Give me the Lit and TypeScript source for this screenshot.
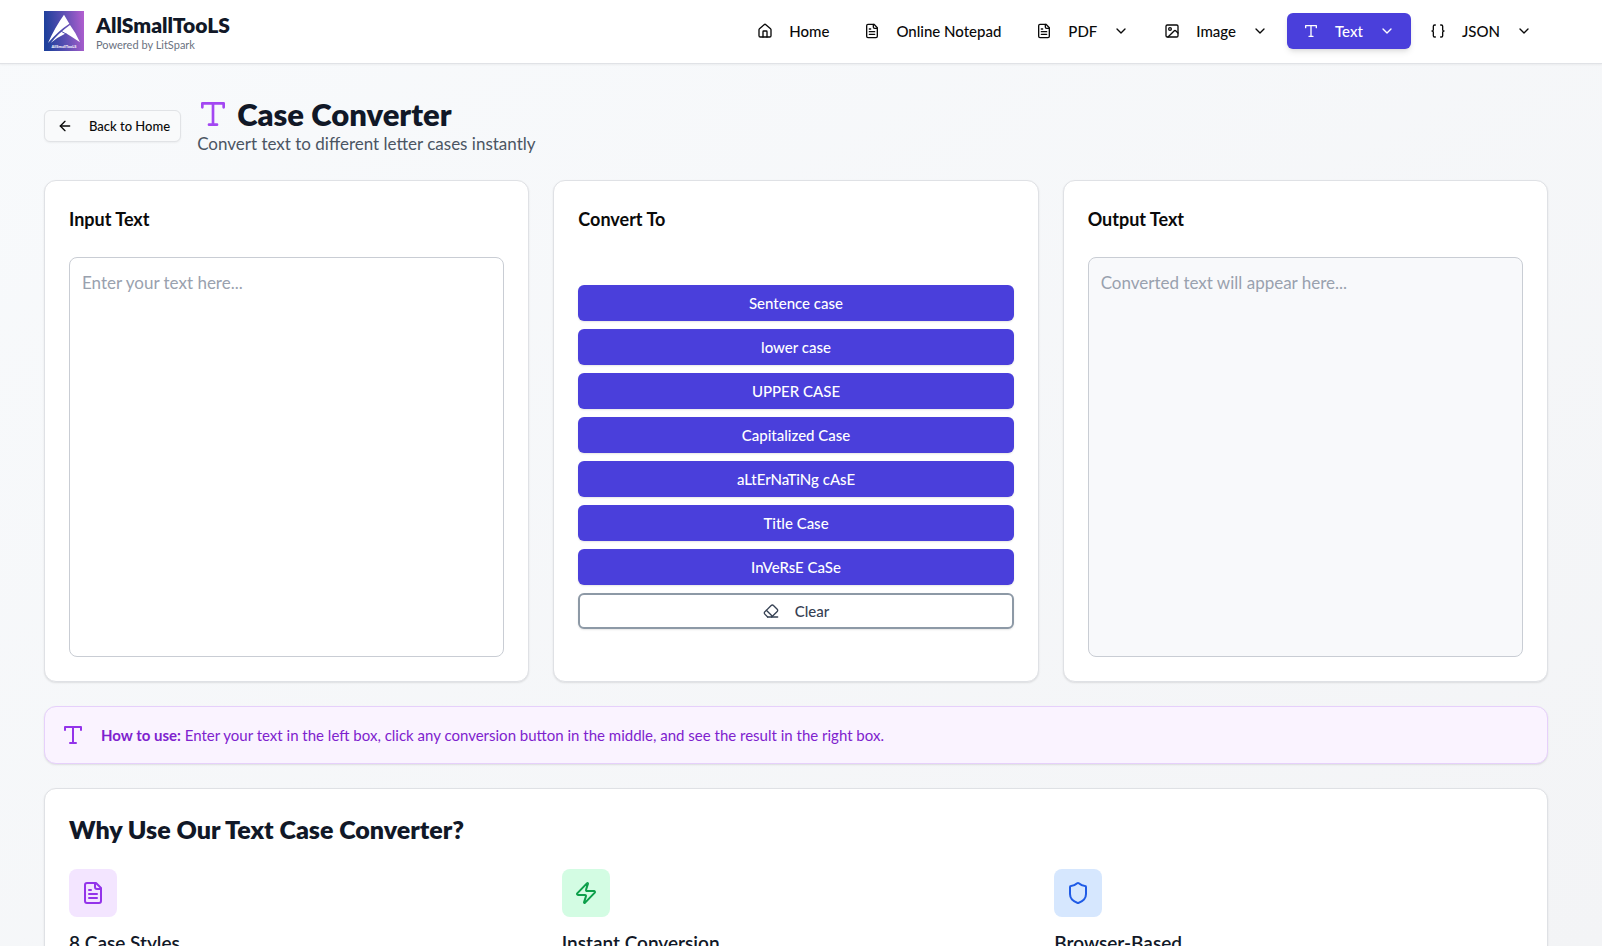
import { LitElement, html, svg, css } from "lit";
import { customElement, property, state } from "lit/decorators.js";
import { classMap } from "lit/directives/class-map.js";

const shapes: Record<string, unknown> = {
  home: svg`<path d="M15 21v-8a1 1 0 0 0-1-1h-4a1 1 0 0 0-1 1v8"/><path d="M3 10a2 2 0 0 1 .709-1.528l7-5.999a2 2 0 0 1 2.582 0l7 5.999A2 2 0 0 1 21 10v9a2 2 0 0 1-2 2H5a2 2 0 0 1-2-2z"/>`,
  file: svg`<path d="M15 2H6a2 2 0 0 0-2 2v16a2 2 0 0 0 2 2h12a2 2 0 0 0 2-2V7Z"/><path d="M14 2v4a2 2 0 0 0 2 2h4"/><path d="M10 9H8"/><path d="M16 13H8"/><path d="M16 17H8"/>`,
  image: svg`<rect width="18" height="18" x="3" y="3" rx="2"/><circle cx="9" cy="9" r="2"/><path d="m21 15-3.086-3.086a2 2 0 0 0-2.828 0L6 21"/>`,
  type: svg`<polyline points="4 7 4 4 20 4 20 7"/><line x1="9" x2="15" y1="20" y2="20"/><line x1="12" x2="12" y1="4" y2="20"/>`,
  braces: svg`<path d="M8 3H7a2 2 0 0 0-2 2v5a2 2 0 0 1-2 2 2 2 0 0 1 2 2v5c0 1.1.9 2 2 2h1"/><path d="M16 21h1a2 2 0 0 0 2-2v-5c0-1.1.9-2 2-2a2 2 0 0 1-2-2V5a2 2 0 0 0-2-2h-1"/>`,
  chevron: svg`<path d="m6 9 6 6 6-6"/>`,
  arrow: svg`<path d="m12 19-7-7 7-7"/><path d="M19 12H5"/>`,
  eraser: svg`<path d="m7 21-4.3-4.3c-1-1-1-2.5 0-3.4l9.6-9.6c1-1 2.5-1 3.4 0l5.6 5.6c1 1 1 2.5 0 3.4L13 21"/><path d="M22 21H7"/><path d="m5 11 9 9"/>`,
  zap: svg`<path d="M4 14a1 1 0 0 1-.78-1.63l9.9-10.2a.5.5 0 0 1 .86.46l-1.92 6.02A1 1 0 0 0 13 10h7a1 1 0 0 1 .78 1.63l-9.9 10.2a.5.5 0 0 1-.86-.46l1.92-6.02A1 1 0 0 0 11 14z"/>`,
  shield: svg`<path d="M20 13c0 5-3.5 7.5-7.66 8.95a1 1 0 0 1-.67-.01C7.5 20.5 4 18 4 13V6a1 1 0 0 1 1-1c2 0 4.5-1.2 6.24-2.72a1.17 1.17 0 0 1 1.52 0C14.51 3.81 17 5 19 5a1 1 0 0 1 1 1z"/>`,
};

@customElement("ui-icon")
class UiIcon extends LitElement {
  @property() name = "";

  static styles = css`
    :host {
      display: block;
      flex: none;
      width: 16px;
      height: 16px;
    }
    .glyph {
      display: block;
      width: 100%;
      height: 100%;
      fill: none;
      stroke: currentColor;
      stroke-width: 2;
      stroke-linecap: round;
      stroke-linejoin: round;
    }
  `;

  render() {
    return html`<svg class="glyph" viewBox="0 0 24 24" aria-hidden="true">${shapes[this.name]}</svg>`;
  }
}

@customElement("brand-logo")
class BrandLogo extends LitElement {
  static styles = css`
    :host {
      display: block;
      flex: none;
      width: 40px;
      height: 40px;
    }
    .mark {
      display: block;
      width: 100%;
      height: 100%;
    }
    .name {
      font: 700 12px Lato, sans-serif;
      fill: #fff;
    }
  `;

  render() {
    return html`<svg class="mark" viewBox="0 0 120 120" aria-hidden="true">
      <defs>
        <linearGradient id="fade" x1="0" y1="0.1" x2="1" y2="0">
          <stop offset="0" stop-color="#1f409c" />
          <stop offset="0.5" stop-color="#5f50b4" />
          <stop offset="1" stop-color="#b45fd0" />
        </linearGradient>
      </defs>
      <rect width="120" height="120" fill="url(#fade)" />
      <path fill="#fff" d="M60 11 L76 38 Q42 60 12 96 Q32 50 60 11Z" />
      <path fill="#fff" d="M78 42 Q96 66 108 94 Q84 78 66 67 Q42 78 20 96 Q44 66 78 42Z" />
      <path fill="none" stroke="#4f4cae" stroke-width="3" d="M52 61 L68 70" />
      <text class="name" x="60" y="112" text-anchor="middle">AllSmallTooLS</text>
    </svg>`;
  }
}

interface NavItem {
  label: string;
  icon: string;
  menu?: boolean;
  active?: boolean;
}

const navItems: NavItem[] = [
  { label: "Home", icon: "home" },
  { label: "Online Notepad", icon: "file" },
  { label: "PDF", icon: "file", menu: true },
  { label: "Image", icon: "image", menu: true },
  { label: "Text", icon: "type", menu: true, active: true },
  { label: "JSON", icon: "braces", menu: true },
];

const upperFirst = (w: string) => w.charAt(0).toUpperCase() + w.slice(1).toLowerCase();
const minor = new Set(["a", "an", "and", "as", "at", "but", "by", "for", "in", "of", "on", "or", "the", "to"]);

const conversions: { label: string; run: (s: string) => string }[] = [
  { label: "Sentence case", run: (s) => s.toLowerCase().replace(/(^\s*|[.!?]\s+)\p{L}/gu, (m) => m.toUpperCase()) },
  { label: "lower case", run: (s) => s.toLowerCase() },
  { label: "UPPER CASE", run: (s) => s.toUpperCase() },
  { label: "Capitalized Case", run: (s) => s.replace(/\S+/g, upperFirst) },
  {
    label: "aLtErNaTiNg cAsE",
    run: (s) => [...s].map((c, i) => (i % 2 ? c.toUpperCase() : c.toLowerCase())).join(""),
  },
  {
    label: "Title Case",
    run: (s) => s.replace(/\S+/g, (w, at) => (at > 0 && minor.has(w.toLowerCase()) ? w.toLowerCase() : upperFirst(w))),
  },
  {
    label: "InVeRsE CaSe",
    run: (s) => [...s].map((c) => (c === c.toUpperCase() ? c.toLowerCase() : c.toUpperCase())).join(""),
  },
];

const features = [
  { title: "8 Case Styles", icon: "file", tone: "purple" },
  { title: "Instant Conversion", icon: "zap", tone: "green" },
  { title: "Browser-Based", icon: "shield", tone: "blue" },
];

@customElement("app-root")
class AppRoot extends LitElement {
  @state() private input = "";
  @state() private output = "";

  static styles = css`
    :host {
      display: block;
      height: 100vh;
      overflow-y: auto;
      scrollbar-width: none;
      box-sizing: border-box;
      background: linear-gradient(to bottom right, #f8fafc, #f3f4f6);
      color: #0a0a0a;
      font-family: Lato, "Open Sans", sans-serif;
      font-size: 16px;
      line-height: 24px;
    }
    *,
    *::before,
    *::after {
      box-sizing: border-box;
    }
    h1,
    h2,
    h3,
    p {
      margin: 0;
    }
    button,
    textarea {
      font-family: inherit;
    }
    .gutter {
      padding-right: 10px;
    }
    .container {
      max-width: 1536px;
      margin: 0 auto;
      padding: 0 16px;
    }
    .header {
      background: #fff;
      border-bottom: 1px solid #e0e2e6;
      box-shadow: 0 1px 2px rgba(0, 0, 0, 0.05);
    }
    .bar {
      display: flex;
      align-items: center;
      justify-content: space-between;
      min-height: 63px;
      padding-bottom: 1px;
    }
    .brand {
      display: flex;
      align-items: center;
      gap: 12px;
      color: #111827;
      text-decoration: none;
    }
    .brand-text {
      display: flex;
      flex-direction: column;
    }
    .brand-name {
      font-size: 21px;
      line-height: 28px;
      font-weight: 800;
    }
    .brand-note {
      font-size: 11px;
      line-height: 12px;
      color: #6b7280;
    }
    .nav {
      display: flex;
      gap: 3px;
    }
    .nav-item {
      display: flex;
      align-items: center;
      gap: 16px;
      height: 36px;
      padding: 0 16px;
      border: 0;
      border-radius: 6px;
      background: none;
      color: inherit;
      font-size: 15px;
      line-height: 20px;
      font-weight: 500;
      text-decoration: none;
      cursor: pointer;
    }
    .nav-item.active {
      background: #4a3fdb;
      color: #fff;
      box-shadow: 0 4px 6px -1px rgba(0, 0, 0, 0.1), 0 2px 4px -2px rgba(0, 0, 0, 0.1);
    }
    .main {
      display: grid;
      gap: 24px;
      padding-top: 32px;
      padding-bottom: 32px;
    }
    .intro {
      display: flex;
      align-items: center;
      gap: 16px;
    }
    .back {
      display: flex;
      align-items: center;
      gap: 16px;
      height: 32px;
      padding: 0 10px 0 12px;
      border: 1px solid #e1e3e6;
      border-radius: 6px;
      background: #f9fafb;
      box-shadow: 0 1px 2px rgba(0, 0, 0, 0.05);
      color: inherit;
      font-size: 13px;
      line-height: 16px;
      font-weight: 500;
      text-decoration: none;
    }
    .title {
      display: flex;
      align-items: center;
      gap: 8px;
      font-size: 31px;
      line-height: 36px;
      font-weight: 800;
      color: #111827;
    }
    .title ui-icon {
      width: 32px;
      height: 32px;
      color: #a347f2;
    }
    .subtitle {
      color: #4b5563;
      font-size: 17px;
    }
    .columns {
      display: grid;
      grid-template-columns: repeat(3, minmax(0, 1fr));
      gap: 24px;
    }
    .card {
      display: flex;
      flex-direction: column;
      gap: 24px;
      padding: 24px;
      border: 1px solid #dfe1e5;
      border-radius: 12px;
      background: #fff;
      box-shadow: 0 1px 2px rgba(0, 0, 0, 0.1);
    }
    .card-title {
      font-size: 18px;
      line-height: 28px;
      font-weight: 700;
    }
    .box {
      display: block;
      width: 100%;
      height: 400px;
      padding: 12px;
      border: 1px solid #c9cdd4;
      border-radius: 8px;
      background: #fff;
      color: inherit;
      font-size: 17px;
      line-height: 26px;
      resize: none;
      outline: none;
    }
    .box::placeholder {
      color: #99a1ae;
      opacity: 1;
    }
    .box.result {
      background: #f8f9fb;
    }
    .actions {
      flex: 1;
      display: flex;
      flex-direction: column;
      justify-content: center;
      gap: 8px;
    }
    .action {
      display: flex;
      align-items: center;
      justify-content: center;
      gap: 16px;
      height: 36px;
      border: 0;
      border-radius: 6px;
      background: #4a3fdb;
      box-shadow: 0 1px 2px rgba(0, 0, 0, 0.1);
      color: #fff;
      font-size: 15px;
      line-height: 20px;
      font-weight: 500;
      cursor: pointer;
    }
    .action.clear {
      border: 2px solid #8d99a6;
      background: #fff;
      color: #364153;
    }
    .notice {
      display: flex;
      align-items: center;
      gap: 16px;
      padding: 16px;
      border: 1px solid #e6d0fb;
      border-radius: 12px;
      background: #faf3ff;
      box-shadow: 0 1px 2px rgba(0, 0, 0, 0.1);
      color: #7e22ce;
      font-size: 15px;
    }
    .notice ui-icon {
      width: 24px;
      height: 24px;
      color: #9333ea;
    }
    .section-title {
      font-size: 25px;
      line-height: 32px;
      font-weight: 800;
      color: #111827;
    }
    .feature {
      display: flex;
      flex-direction: column;
      align-items: flex-start;
      gap: 12px;
    }
    .tile {
      display: grid;
      place-items: center;
      width: 48px;
      height: 48px;
      border-radius: 8px;
    }
    .tile ui-icon {
      width: 24px;
      height: 24px;
    }
    .purple {
      background: #f3e5ff;
      color: #9333ea;
    }
    .green {
      background: #d3fce3;
      color: #0c9f4a;
    }
    .blue {
      background: #d6e7fe;
      color: #1f5be6;
    }
    .feature-title {
      font-size: 19px;
      line-height: 28px;
      font-weight: 600;
      color: #111827;
    }
  `;

  private clear() {
    this.input = "";
    this.output = "";
  }

  private navItem(item: NavItem) {
    const classes = classMap({ "nav-item": true, active: !!item.active });
    return item.menu
      ? html`<button class=${classes} type="button" aria-haspopup="menu">
          <ui-icon name=${item.icon}></ui-icon>${item.label}<ui-icon name="chevron"></ui-icon>
        </button>`
      : html`<a class=${classes} href="#"><ui-icon name=${item.icon}></ui-icon>${item.label}</a>`;
  }

  render() {
    return html`
      <header class="header gutter">
        <div class="container bar">
          <a class="brand" href="#">
            <brand-logo></brand-logo>
            <span class="brand-text">
              <span class="brand-name">AllSmallTooLS</span>
              <span class="brand-note">Powered by LitSpark</span>
            </span>
          </a>
          <nav class="nav">${navItems.map((item) => this.navItem(item))}</nav>
        </div>
      </header>
      <div class="gutter">
        <main class="container main">
          <div class="intro">
            <a class="back" href="#"><ui-icon name="arrow"></ui-icon>Back to Home</a>
            <div>
              <h1 class="title"><ui-icon name="type"></ui-icon>Case Converter</h1>
              <p class="subtitle">Convert text to different letter cases instantly</p>
            </div>
          </div>
          <div class="columns">
            <section class="card">
              <label class="card-title" for="source">Input Text</label>
              <textarea
                id="source"
                class="box"
                placeholder="Enter your text here..."
                .value=${this.input}
                @input=${(e: Event) => (this.input = (e.target as HTMLTextAreaElement).value)}
              ></textarea>
            </section>
            <section class="card">
              <h2 class="card-title">Convert To</h2>
              <div class="actions">
                ${conversions.map(
                  (c) => html`<button class="action" type="button" @click=${() => (this.output = c.run(this.input))}>
                    ${c.label}
                  </button>`
                )}
                <button class="action clear" type="button" @click=${this.clear}>
                  <ui-icon name="eraser"></ui-icon>Clear
                </button>
              </div>
            </section>
            <section class="card">
              <label class="card-title" for="result">Output Text</label>
              <textarea
                id="result"
                class="box result"
                placeholder="Converted text will appear here..."
                readonly
                .value=${this.output}
              ></textarea>
            </section>
          </div>
          <div class="notice">
            <ui-icon name="type"></ui-icon>
            <p>
              <strong>How to use:</strong> Enter your text in the left box, click any conversion button in the middle,
              and see the result in the right box.
            </p>
          </div>
          <section class="card">
            <h2 class="section-title">Why Use Our Text Case Converter?</h2>
            <div class="columns">
              ${features.map(
                (f) => html`<div class="feature">
                  <span class="tile ${f.tone}"><ui-icon name=${f.icon}></ui-icon></span>
                  <h3 class="feature-title">${f.title}</h3>
                </div>`
              )}
            </div>
          </section>
        </main>
      </div>
    `;
  }
}
